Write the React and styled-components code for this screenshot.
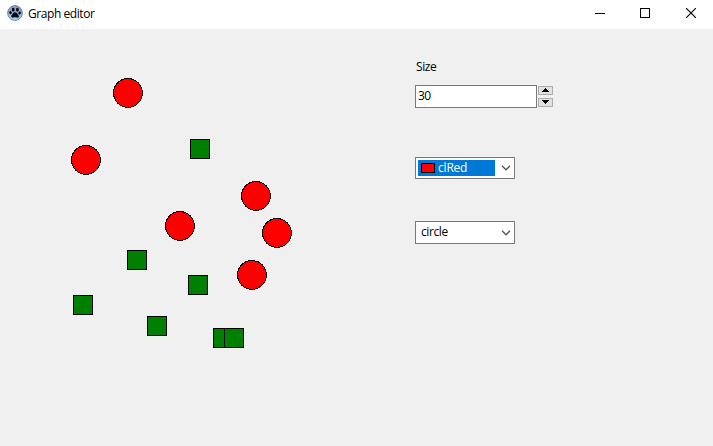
import React from "react";
import styled, { createGlobalStyle } from "styled-components";

const GlobalStyle = createGlobalStyle`
  * { box-sizing: border-box; }
  body {
    margin: 0;
    background: #f0f0f0;
    color: #000;
    font: 12px/16px "Open Sans", "Noto Sans", sans-serif;
    overflow: hidden;
  }
  svg { display: block; }
`;

const Window = styled.div`
  display: flex;
  flex-direction: column;
  width: 713px;
  height: 446px;
  background: #f0f0f0;
`;

const TitleBar = styled.header`
  display: flex;
  align-items: center;
  flex: 0 0 29px;
  padding: 0 0 3px 7px;
  background: #fff;
`;

const Label = styled.span`
  white-space: nowrap;
  letter-spacing: ${(p) => p.$spacing || "0"};
`;

const Title = styled(Label)`
  flex: 1;
  margin-left: 5px;
  padding-top: 2px;
`;

const WindowButton = styled.button`
  display: flex;
  justify-content: center;
  width: 45px;
  padding: 0;
  border: 0;
  background: transparent;
`;

const CloseButton = styled(WindowButton)`
  width: 46px;
  padding-left: 1px;
`;

const Content = styled.main`
  display: flex;
  flex: 1;
`;

const Canvas = styled.svg`
  flex: 0 0 415px;
  height: 417px;
`;

const Panel = styled.section`
  display: flex;
  flex-direction: column;
  align-items: flex-start;
  padding-top: 30px;
`;

const FieldLabel = styled(Label)`
  padding-left: 1px;
`;

const SpinEdit = styled.div`
  display: flex;
  gap: 1px;
  margin: 10px 0 49px;
`;

const SpinInput = styled.div`
  width: 122px;
  height: 23px;
  padding: 2px;
  border: 1px solid #7a7a7a;
  background: #fff;
`;

const SpinButtons = styled.div`
  display: flex;
  flex-direction: column;
  gap: 3px;
  padding-top: 1px;
`;

const SpinButton = styled.button`
  display: flex;
  justify-content: center;
  align-items: flex-start;
  width: 15px;
  height: 9px;
  padding: 1px 0 0;
  border: 1px solid #adadad;
  background: #e1e1e1;
`;

const Combo = styled.div`
  display: flex;
  align-items: center;
  justify-content: space-between;
  width: 100px;
  height: ${(p) => p.$height}px;
  margin-bottom: 42px;
  padding: 0 3px 0 2px;
  border: 1px solid #7a7a7a;
  background: #fff;
`;

const ComboValue = styled.div`
  display: flex;
  align-items: center;
  gap: 3px;
  width: 77px;
  height: 16px;
  padding-left: 3px;
  color: ${(p) => (p.$selected ? "#fff" : "#000")};
  background: ${(p) => (p.$selected ? "#0078d7" : "transparent")};
`;

const PlainValue = styled(ComboValue)`
  margin-bottom: 2px;
`;

const Swatch = styled.span`
  width: 14px;
  height: 10px;
  border: 1px solid #000;
  background: #f00;
`;

const circles = [[113, 78], [71, 145], [165, 211], [241, 181], [262, 218], [237, 260]];
const squares = [[190, 139], [127, 250], [188, 275], [73, 295], [147, 316], [213, 328], [224, 328]];

const PawIcon = () => (
  <svg width="16" height="16" viewBox="0 0 16 16">
    <defs>
      <linearGradient id="orb" x1="0" y1="0" x2="0" y2="1">
        <stop offset="0" stopColor="#8a9bbd" />
        <stop offset=".5" stopColor="#94add0" />
        <stop offset="1" stopColor="#9fe0ff" />
      </linearGradient>
    </defs>
    <circle cx="8" cy="8" r="7.4" fill="url(#orb)" stroke="#5c7094" strokeWidth=".8" />
    <g fill="#05090f">
      <ellipse cx="6.2" cy="4.7" rx="1.4" ry="1.9" />
      <ellipse cx="10.4" cy="4.7" rx="1.4" ry="1.9" />
      <ellipse cx="3.5" cy="7.6" rx="1.3" ry="1.6" transform="rotate(-25 3.5 7.6)" />
      <ellipse cx="12.6" cy="8" rx="1.2" ry="1.6" transform="rotate(25 12.6 8)" />
      <path d="M8 7.3C9.8 7.3 10.4 9.1 11.5 10.2C12.7 11.6 11.4 13.2 9.8 12.6Q8 12 6.2 12.6C4.5 13.1 3.4 11.4 4.7 10.1C5.8 9 6.3 7.3 8 7.3Z" />
    </g>
  </svg>
);

const Chevron = () => (
  <svg width="10" height="6" viewBox="0 0 10 6">
    <path d="M1 .8L5 4.8L9 .8" fill="none" stroke="#555" strokeWidth="1.3" />
  </svg>
);

const Triangle = ({ down }) => (
  <svg width="7" height="4" viewBox="0 0 7 4" shapeRendering="crispEdges">
    <path d={down ? "M0 0H7V1H6V2H5V3H4V4H3V3H2V2H1V1H0Z" : "M0 4H7V3H6V2H5V1H4V0H3V1H2V2H1V3H0Z"} />
  </svg>
);

export default function App() {
  return (
    <Window>
      <GlobalStyle />
      <TitleBar>
        <PawIcon />
        <Title $spacing="-0.43px">Graph editor</Title>
        <WindowButton aria-label="Minimize">
          <svg width="10" height="10" shapeRendering="crispEdges"><path d="M0 5H10V6H0Z" /></svg>
        </WindowButton>
        <WindowButton aria-label="Maximize">
          <svg width="10" height="10" shapeRendering="crispEdges">
            <path d="M.5 .5H9.5V9.5H.5Z" fill="none" stroke="#000" />
          </svg>
        </WindowButton>
        <CloseButton aria-label="Close">
          <svg width="10" height="10">
            <path d="M0 0L10 10M10 0L0 10" fill="none" stroke="#000" strokeWidth="1.1" />
          </svg>
        </CloseButton>
      </TitleBar>
      <Content>
        <Canvas viewBox="0 29 415 417" shapeRendering="crispEdges" stroke="#000">
          {squares.map(([x, y]) => (
            <rect key={`${x}-${y}`} x={x + 0.5} y={y + 0.5} width="19" height="19" fill="#008000" />
          ))}
          {circles.map(([x, y]) => (
            <circle key={`${x}-${y}`} cx={x + 14.9} cy={y + 14.9} r="14.4" fill="#f00" />
          ))}
        </Canvas>
        <Panel>
          <FieldLabel $spacing="-0.4px">Size</FieldLabel>
          <SpinEdit>
            <SpinInput><Label $spacing="-0.5px">30</Label></SpinInput>
            <SpinButtons>
              <SpinButton aria-label="Increase"><Triangle /></SpinButton>
              <SpinButton aria-label="Decrease"><Triangle down /></SpinButton>
            </SpinButtons>
          </SpinEdit>
          <Combo $height={22}>
            <ComboValue $selected><Swatch /><Label $spacing="-0.2px">clRed</Label></ComboValue>
            <Chevron />
          </Combo>
          <Combo $height={23}>
            <PlainValue><Label $spacing="-0.4px">circle</Label></PlainValue>
            <Chevron />
          </Combo>
        </Panel>
      </Content>
    </Window>
  );
}
